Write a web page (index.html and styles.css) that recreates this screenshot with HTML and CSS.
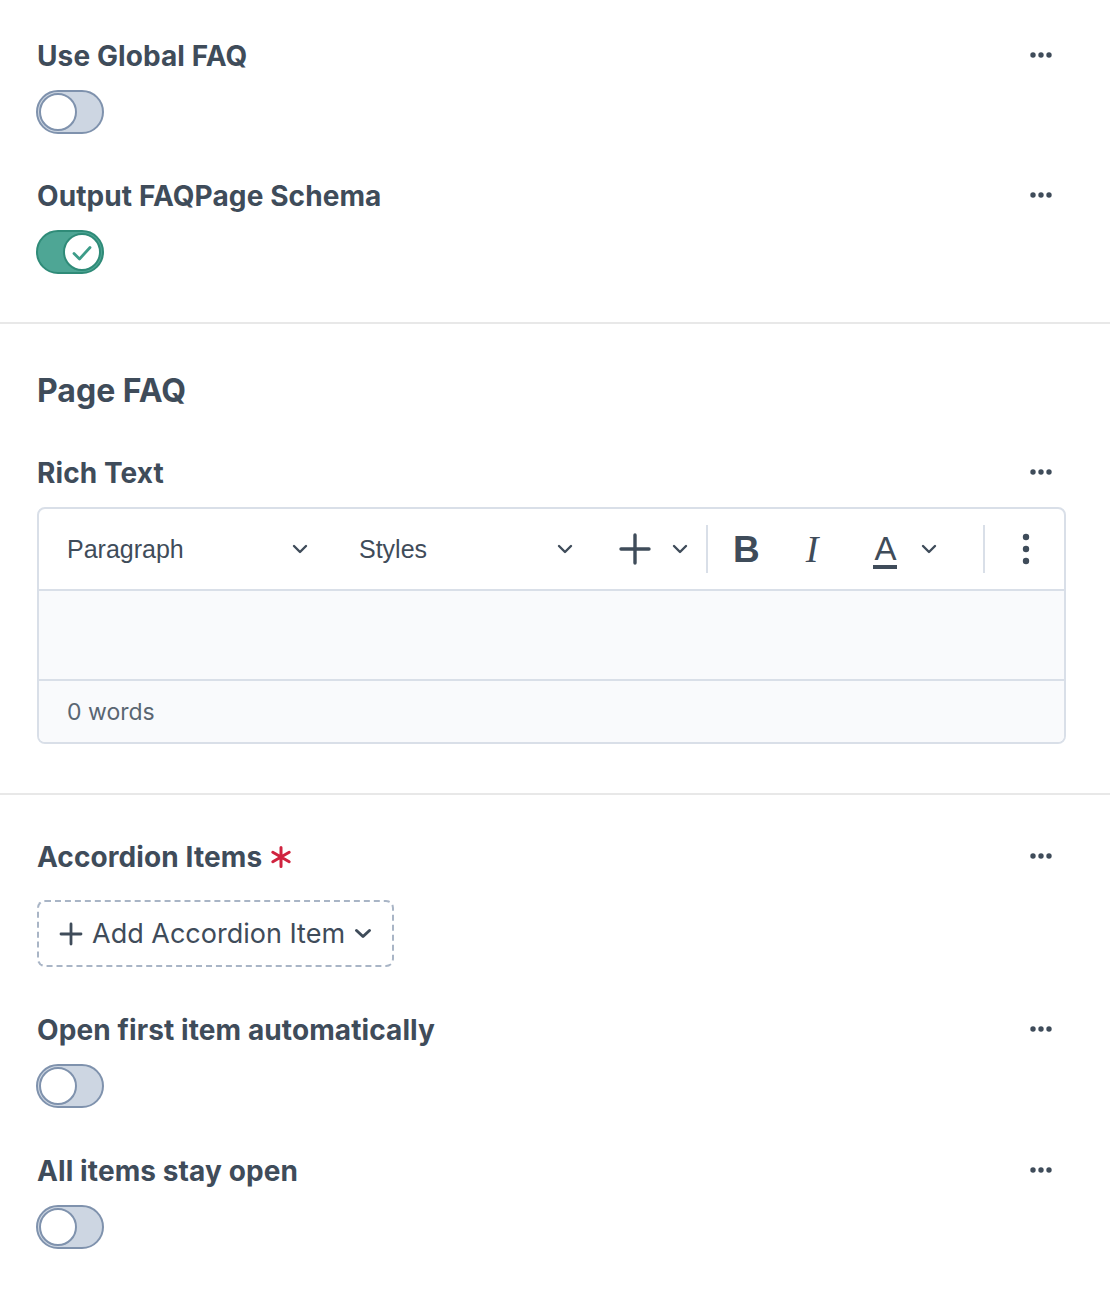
FILE: index.html
```html
<!DOCTYPE html>
<html>
<head>
<meta charset="utf-8">
<link rel="stylesheet" href="styles.css">
</head>
<body>
<div class="page">
  <section class="section s1">
    <div class="field">
      <div class="label-row">
        <span class="label">Use Global FAQ</span>
        <svg class="dots" width="22" height="6" viewBox="0 0 22 6"><circle cx="3" cy="3" r="2.7"/><circle cx="11" cy="3" r="2.7"/><circle cx="19" cy="3" r="2.7"/></svg>
      </div>
      <div class="toggle"><span class="knob"></span></div>
    </div>
    <div class="field">
      <div class="label-row">
        <span class="label">Output FAQPage Schema</span>
        <svg class="dots" width="22" height="6" viewBox="0 0 22 6"><circle cx="3" cy="3" r="2.7"/><circle cx="11" cy="3" r="2.7"/><circle cx="19" cy="3" r="2.7"/></svg>
      </div>
      <div class="toggle on"><span class="knob"><svg width="22" height="18" viewBox="0 0 22 18"><path d="M3 9.5 L8.5 15 L19 3.5" fill="none" stroke="#3d9c89" stroke-width="2.8" stroke-linecap="round" stroke-linejoin="round"/></svg></span></div>
    </div>
  </section>

  <section class="section s2">
    <h2 class="heading">Page FAQ</h2>
    <div class="field">
      <div class="label-row">
        <span class="label">Rich Text</span>
        <svg class="dots" width="22" height="6" viewBox="0 0 22 6"><circle cx="3" cy="3" r="2.7"/><circle cx="11" cy="3" r="2.7"/><circle cx="19" cy="3" r="2.7"/></svg>
      </div>
      <div class="editor">
        <div class="toolbar">
          <div class="select sel1"><span>Paragraph</span><svg class="chev" width="16" height="10" viewBox="0 0 16 10"><path d="M2 2 L8 8 L14 2" fill="none" stroke="#3f4c5a" stroke-width="2.4" stroke-linecap="round" stroke-linejoin="round"/></svg></div>
          <div class="select sel2"><span>Styles</span><svg class="chev" width="16" height="10" viewBox="0 0 16 10"><path d="M2 2 L8 8 L14 2" fill="none" stroke="#3f4c5a" stroke-width="2.4" stroke-linecap="round" stroke-linejoin="round"/></svg></div>
          <svg class="plus" width="32" height="32" viewBox="0 0 32 32"><path d="M16 2 V30 M2 16 H30" fill="none" stroke="#3f4c5a" stroke-width="3.4" stroke-linecap="round"/></svg>
          <svg class="chev chev-s" width="16" height="10" viewBox="0 0 16 10"><path d="M2 2 L8 8 L14 2" fill="none" stroke="#3f4c5a" stroke-width="2.4" stroke-linecap="round" stroke-linejoin="round"/></svg>
          <span class="sep"></span>
          <span class="tb-b">B</span>
          <span class="tb-i">I</span>
          <span class="tb-a">A</span>
          <svg class="chev chev-s chev-a" width="16" height="10" viewBox="0 0 16 10"><path d="M2 2 L8 8 L14 2" fill="none" stroke="#3f4c5a" stroke-width="2.4" stroke-linecap="round" stroke-linejoin="round"/></svg>
          <span class="sep sep2"></span>
          <svg class="vdots" width="8" height="32" viewBox="0 0 8 32"><circle cx="4" cy="4" r="3.2"/><circle cx="4" cy="16" r="3.2"/><circle cx="4" cy="28" r="3.2"/></svg>
        </div>
        <div class="editor-body"></div>
        <div class="editor-footer">0 words</div>
      </div>
    </div>
  </section>

  <section class="section s3">
    <div class="field">
      <div class="label-row">
        <span class="label">Accordion Items <svg class="req" width="22" height="22" viewBox="0 0 22 22"><path d="M11 1.5 V20.5 M2.8 6.25 L19.2 15.75 M2.8 15.75 L19.2 6.25" fill="none" stroke="#d0233f" stroke-width="3" stroke-linecap="round"/></svg></span>
        <svg class="dots" width="22" height="6" viewBox="0 0 22 6"><circle cx="3" cy="3" r="2.7"/><circle cx="11" cy="3" r="2.7"/><circle cx="19" cy="3" r="2.7"/></svg>
      </div>
      <div class="add-btn">
        <svg width="24" height="24" viewBox="0 0 24 24"><path d="M12 2 V22 M2 12 H22" fill="none" stroke="#3f4c5a" stroke-width="2.8" stroke-linecap="round"/></svg>
        <span>Add Accordion Item</span>
        <svg width="18" height="11" viewBox="0 0 18 11"><path d="M2.5 2.5 L9 8.5 L15.5 2.5" fill="none" stroke="#3f4c5a" stroke-width="3" stroke-linecap="round" stroke-linejoin="round"/></svg>
      </div>
    </div>
    <div class="field">
      <div class="label-row">
        <span class="label">Open first item automatically</span>
        <svg class="dots" width="22" height="6" viewBox="0 0 22 6"><circle cx="3" cy="3" r="2.7"/><circle cx="11" cy="3" r="2.7"/><circle cx="19" cy="3" r="2.7"/></svg>
      </div>
      <div class="toggle"><span class="knob"></span></div>
    </div>
    <div class="field">
      <div class="label-row">
        <span class="label">All items stay open</span>
        <svg class="dots" width="22" height="6" viewBox="0 0 22 6"><circle cx="3" cy="3" r="2.7"/><circle cx="11" cy="3" r="2.7"/><circle cx="19" cy="3" r="2.7"/></svg>
      </div>
      <div class="toggle"><span class="knob"></span></div>
    </div>
  </section>
</div>
</body>
</html>
```

FILE: styles.css
```css
* { box-sizing: border-box; }
html, body { margin: 0; padding: 0; background: #fff; }
body {
  font-family: Inter, "Liberation Sans", sans-serif;
  color: #3f4c5a;
}
.page { width: 1110px; }

.section {
  padding: 0 45px 0 36px;
  display: flex;
  flex-direction: column;
}
.s1 { padding-top: 36px; padding-bottom: 48px; gap: 42px; border-bottom: 2px solid #e8e8e8; }
.s2 { padding-top: 47px; padding-bottom: 49px; gap: 42px; border-bottom: 2px solid #e8e8e8; }
.s3 { padding-top: 42px; padding-bottom: 46px; gap: 43px; }

.field { display: flex; flex-direction: column; gap: 14px; align-items: flex-start; }

.label-row {
  width: 100%;
  height: 40px;
  display: flex;
  align-items: center;
  justify-content: space-between;
}
.label {
  font-size: 28px;
  font-weight: 700;
  letter-spacing: 0.1px;
  line-height: 40px;
  display: inline-flex;
  align-items: center;
  padding-left: 1px;
}
.dots { fill: #3f4c5a; margin-right: 13px; margin-top: -2px; }
.req { margin-left: 8px; }

.heading {
  margin: 0;
  padding-left: 1px;
  font-size: 32px;
  font-weight: 700;
  line-height: 40px;
}

/* toggle */
.toggle {
  width: 68px;
  height: 44px;
  border: 2px solid #7f92ad;
  border-radius: 22px;
  background: #cdd6e2;
  display: flex;
  align-items: center;
  padding: 0 1px;
}
.knob {
  width: 38px;
  height: 38px;
  border-radius: 50%;
  background: #fff;
  border: 2px solid #7f92ad;
  display: flex;
  align-items: center;
  justify-content: center;
}
.toggle.on {
  background: #4ea695;
  border-color: #2f8b78;
  justify-content: flex-end;
}
.toggle.on .knob { border-color: #2f8b78; }
.toggle.on .knob svg { margin-top: 1px; }

/* editor */
.editor {
  width: 100%;
  margin-left: 1px;
  border: 2px solid #d9dfe8;
  border-radius: 8px;
  overflow: hidden;
}
.toolbar {
  height: 82px;
  display: flex;
  align-items: center;
  padding-left: 28px;
  border-bottom: 2px solid #d9dfe8;
  font-family: "Liberation Sans", Arial, sans-serif;
}
.select {
  display: flex;
  align-items: center;
  justify-content: space-between;
  font-size: 25px;
}
.sel1 { width: 241px; }
.sel2 { width: 214px; margin-left: 51px; }
.plus { margin-left: 46px; }
.chev-s { margin-left: 21px; }
.sep { width: 2px; height: 48px; background: #d9dfe8; margin-left: 18px; }
.tb-b {
  margin-left: 25px;
  font-size: 37px;
  font-weight: 700;
  line-height: 1;
  font-family: "Liberation Sans", Arial, sans-serif;
}
.tb-i {
  margin-left: 46px;
  font-family: "Liberation Serif", serif;
  font-style: italic;
  font-size: 38px;
  line-height: 1;
}
.tb-a {
  margin-left: 55px;
  font-size: 33px;
  font-weight: 300;
  line-height: 32px;
  border-bottom: 4px solid #3f4c5a;
  padding: 0 1px;
  margin-top: 4px;
}
.chev-a { margin-left: 24px; }
.sep2 { margin-left: 46px; }
.vdots { fill: #3f4c5a; margin-left: 37px; }

.editor-body {
  height: 90px;
  background: #f9fafc;
  border-bottom: 2px solid #d9dfe8;
}
.editor-footer {
  height: 61px;
  background: #f9fafc;
  display: flex;
  align-items: center;
  padding-left: 28px;
  font-size: 23px;
  color: #5a6672;
}

/* add button */
.add-btn {
  margin-top: 9px;
  margin-left: 1px;
  width: 357px;
  height: 67px;
  border: 2px dashed #a9b5c6;
  border-radius: 8px;
  display: flex;
  align-items: center;
  padding-left: 20px;
  gap: 9px;
  font-size: 27px;
  color: #3f4c5a;
}
```
